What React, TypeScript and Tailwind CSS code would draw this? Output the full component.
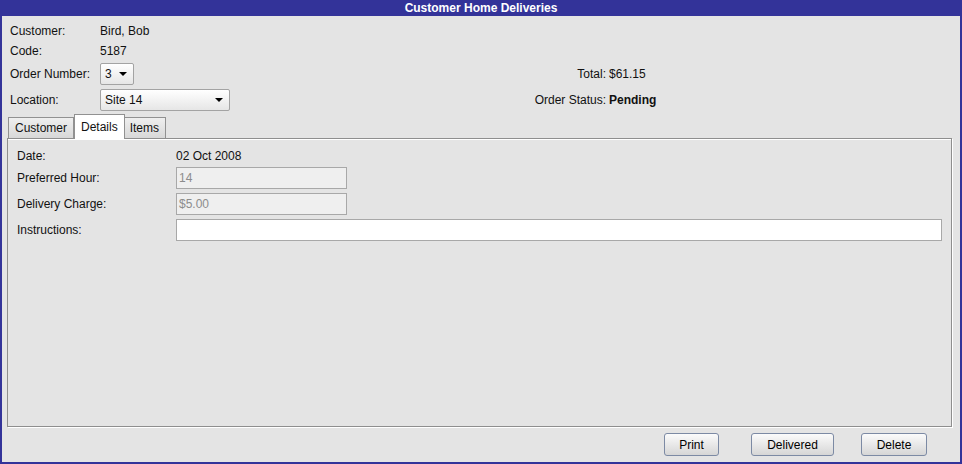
const Combo = ({ value, width }: { value: string; width: string }) => (
  <div
    className={`flex items-center justify-between h-[22px] ${width} pl-[4px] pr-[6px] border border-[#a3a3a3] rounded-[2px] bg-gradient-to-b from-[#ffffff] to-[#e6e6e6]`}
  >
    <span>{value}</span>
    <svg width="8" height="4" viewBox="0 0 8 4">
      <path d="M0 0h8L4 4z" fill="#000" />
    </svg>
  </div>
);

const Field = ({ value, disabled, width }: { value?: string; disabled?: boolean; width: string }) => (
  <div
    className={`h-[22px] ${width} flex items-center px-[2px] border border-[#a8a8a8] ${
      disabled ? 'bg-[#efefef] text-[#8c8c8c]' : 'bg-white'
    }`}
  >
    {value}
  </div>
);

const Button = ({ label, width }: { label: string; width: string }) => (
  <button
    className={`h-[23px] ${width} flex items-center justify-center border border-[#7c8aa4] rounded-[3px] bg-gradient-to-b from-[#fbfbfb] to-[#d6d6d6] text-black`}
  >
    {label}
  </button>
);

export default function App() {
  return (
    <div
      className="w-[962px] h-[464px] flex flex-col bg-[#e4e4e4] border-x-2 border-b-2 border-[#333399] text-[12px] text-[#111] overflow-hidden"
      style={{ fontFamily: '"Liberation Sans", Arial, sans-serif' }}
    >
      <div className="h-[16px] bg-[#333399] text-white font-bold flex items-center justify-center leading-none">
        Customer Home Deliveries
      </div>

      <div className="flex flex-col pl-[8px] pt-[5px]">
        <div className="h-[20px] flex items-center">
          <span className="w-[90px]">Customer:</span>
          <span>Bird, Bob</span>
        </div>
        <div className="h-[20px] flex items-center">
          <span className="w-[90px]">Code:</span>
          <span>5187</span>
        </div>
        <div className="h-[26px] flex items-center">
          <div className="w-[596px] flex items-center">
            <span className="w-[90px]">Order Number:</span>
            <Combo value="3" width="w-[34px]" />
            <span className="ml-auto">Total:</span>
          </div>
          <span className="ml-[3px]">$61.15</span>
        </div>
        <div className="h-[26px] flex items-center">
          <div className="w-[596px] flex items-center">
            <span className="w-[90px]">Location:</span>
            <Combo value="Site 14" width="w-[130px]" />
            <span className="ml-auto">Order Status:</span>
          </div>
          <span className="ml-[3px] font-bold">Pending</span>
        </div>
      </div>

      <div className="flex items-end pl-[6px] h-[25px]">
        <div className="h-[21px] px-[6px] flex items-center border border-b-0 border-[#919191] bg-gradient-to-b from-[#efefef] to-[#d8d8d8]">
          Customer
        </div>
        <div className="h-[25px] px-[6px] flex items-start pt-[3px] border border-b-0 border-[#919191] bg-white -mb-[1px] relative z-10">
          Details
        </div>
        <div className="h-[21px] pl-[5px] pr-[6px] flex items-center border border-b-0 border-l-0 border-[#919191] bg-gradient-to-b from-[#efefef] to-[#d8d8d8]">
          Items
        </div>
      </div>

      <div className="ml-[5px] mr-[8px] h-[289px] border border-[#8e8e8e] shadow-[inset_0_1px_0_#fff,1px_1px_0_#fff] flex flex-col pl-[9px] pr-[9px] pt-[7px]">
        <div className="h-[20px] flex items-center">
          <span className="w-[159px]">Date:</span>
          <span>02 Oct 2008</span>
        </div>
        <div className="h-[22px] mt-[1px] flex items-center">
          <span className="w-[159px]">Preferred Hour:</span>
          <Field value="14" disabled width="w-[171px]" />
        </div>
        <div className="h-[22px] mt-[4px] flex items-center">
          <span className="w-[159px]">Delivery Charge:</span>
          <Field value="$5.00" disabled width="w-[171px]" />
        </div>
        <div className="h-[22px] mt-[4px] flex items-center">
          <span className="w-[159px]">Instructions:</span>
          <Field width="flex-1" />
        </div>
      </div>

      <div className="flex items-center pt-[6px] pl-[662px]">
        <Button label="Print" width="w-[55px]" />
        <div className="w-[32px]" />
        <Button label="Delivered" width="w-[83px]" />
        <div className="w-[27px]" />
        <Button label="Delete" width="w-[66px]" />
      </div>
    </div>
  );
}
